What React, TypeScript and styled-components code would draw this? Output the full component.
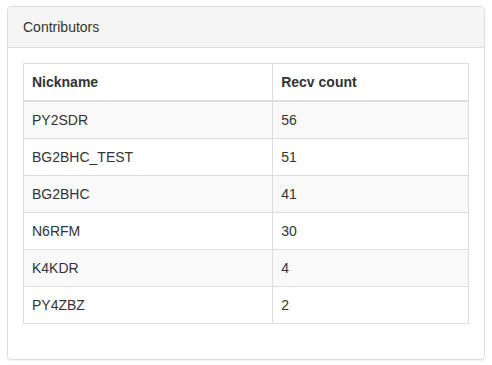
import styled, { createGlobalStyle } from 'styled-components';

const GlobalStyle = createGlobalStyle`
  html, body {
    margin: 0;
    padding: 0;
    background: #fff;
  }
  body {
    font-family: "Liberation Sans", Arial, sans-serif;
    font-size: 14px;
    line-height: 1.42857143;
    color: #333;
  }
  * {
    box-sizing: border-box;
  }
`;

const contributors = [
  { nickname: 'PY2SDR', count: 56 },
  { nickname: 'BG2BHC_TEST', count: 51 },
  { nickname: 'BG2BHC', count: 41 },
  { nickname: 'N6RFM', count: 30 },
  { nickname: 'K4KDR', count: 4 },
  { nickname: 'PY4ZBZ', count: 2 },
];

const App = () => {
  return (
    <Page>
      <GlobalStyle />
      <Panel>
        <PanelHeading>Contributors</PanelHeading>
        <PanelBody>
          <Table>
            <thead>
              <tr>
                <Th>Nickname</Th>
                <Th>Recv count</Th>
              </tr>
            </thead>
            <tbody>
              {contributors.map((c, i) => (
                <Row key={c.nickname} $striped={i % 2 === 0}>
                  <Td>{c.nickname}</Td>
                  <Td>{c.count}</Td>
                </Row>
              ))}
            </tbody>
          </Table>
        </PanelBody>
      </Panel>
    </Page>
  );
};
export default App;

const Page = styled.div`
  padding: 6px 7px;
`;

const Panel = styled.div`
  width: 478px;
  background: #fff;
  border: 1px solid #ddd;
  border-radius: 4px;
  box-shadow: 0 1px 1px rgba(0, 0, 0, 0.05);
`;

const PanelHeading = styled.div`
  padding: 10px 15px;
  background: #f5f5f5;
  color: #333;
  border-bottom: 1px solid #ddd;
  border-top-left-radius: 3px;
  border-top-right-radius: 3px;
`;

const PanelBody = styled.div`
  padding: 15px;
`;

const Table = styled.table`
  width: 100%;
  margin-bottom: 20px;
  border-collapse: collapse;
  border-spacing: 0;
  border: 1px solid #ddd;
`;

const Th = styled.th`
  width: 56%;
  padding: 8px;
  text-align: left;
  font-weight: 700;
  vertical-align: bottom;
  border: 1px solid #ddd;
  border-bottom-width: 2px;

  & + & {
    width: auto;
  }
`;

const Row = styled.tr<{ $striped: boolean }>`
  background: ${(p) => (p.$striped ? '#f9f9f9' : '#fff')};
`;

const Td = styled.td`
  padding: 8px;
  vertical-align: top;
  border: 1px solid #ddd;
`;
